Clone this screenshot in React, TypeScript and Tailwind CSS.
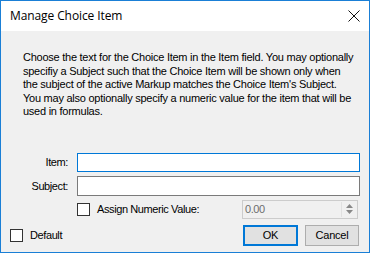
function Checkbox() {
  return <span className="block w-[13px] h-[13px] border border-[#333333] bg-white shrink-0" />;
}

const lines = [
  "Choose the text for the Choice Item in the Item field. You may optionally",
  "specifiy a Subject such that the Choice Item will be shown only when",
  "the subject of the active Markup matches the Choice Item's Subject.",
  "You may also optionally specify a numeric value for the item that will be",
  "used in formulas.",
];

export default function App() {
  return (
    <div
      className="w-[370px] h-[253px] border border-[#1a7fd6] bg-[#f0f0f0] flex flex-col text-[11px] tracking-[-0.4px] text-black"
      style={{ fontFamily: '"Liberation Sans", Arial, sans-serif' }}
    >
      <div className="h-[30px] bg-white flex items-center justify-between pl-[9px] pr-[8px] shrink-0">
        <span
          className="text-[12px] tracking-[-0.1px] text-black"
          style={{ fontFamily: '"Open Sans", "Noto Sans", sans-serif' }}
        >
          Manage Choice Item
        </span>
        <svg width="12" height="12" viewBox="0 0 12 12" className="mr-[1px]">
          <path d="M0.5 0.5 L11.5 11.5 M11.5 0.5 L0.5 11.5" stroke="#111" strokeWidth="1" />
        </svg>
      </div>

      <div className="flex-1 flex flex-col px-[9px] pt-[20px] pb-[6px]">
        <div className="pl-[13px] leading-[13.5px] tracking-[-0.25px]">
          {lines.map((l) => (
            <div key={l} className="whitespace-nowrap">
              {l}
            </div>
          ))}
        </div>

        <div className="mt-[34px] grid grid-cols-[58px_1fr] gap-x-[9px] gap-y-[4px] items-center">
          <span className="text-right pt-[1px]">Item:</span>
          <div className="h-[19px] border border-[#0078d7] bg-white" />
          <span className="text-right pt-[1px]">Subject:</span>
          <div className="h-[20px] border border-[#7a7a7a] bg-white" />
          <span />
          <div className="flex items-center h-[19px]">
            <Checkbox />
            <span className="ml-[7px]">Assign Numeric Value:</span>
            <div className="ml-auto mr-[2px] w-[116px] h-[19px] border border-[#cccccc] flex items-center">
              <span className="pl-[2px] text-[#6d6d6d] flex-1">0.00</span>
              <div className="w-[15px] h-[15px] mr-[1px] flex flex-col items-center justify-center gap-[2px] border-l border-[#e0e0e0]">
                <svg width="7" height="4" viewBox="0 0 7 4">
                  <path d="M3.5 0 L7 4 L0 4 Z" fill="#888" />
                </svg>
                <svg width="7" height="4" viewBox="0 0 7 4">
                  <path d="M0 0 L7 0 L3.5 4 Z" fill="#888" />
                </svg>
              </div>
            </div>
          </div>
        </div>

        <div className="mt-auto flex items-center">
          <Checkbox />
          <span className="ml-[7px]">Default</span>
          <div className="ml-auto mr-[1px] flex gap-[7px]">
            <button className="w-[55px] h-[21px] border-2 border-[#0078d7] bg-[#e1e1e1] text-[11px] tracking-[-0.2px]">
              OK
            </button>
            <button className="w-[54px] h-[21px] border border-[#adadad] bg-[#e1e1e1] text-[11px] tracking-[-0.2px]">
              Cancel
            </button>
          </div>
        </div>
      </div>
    </div>
  );
}
